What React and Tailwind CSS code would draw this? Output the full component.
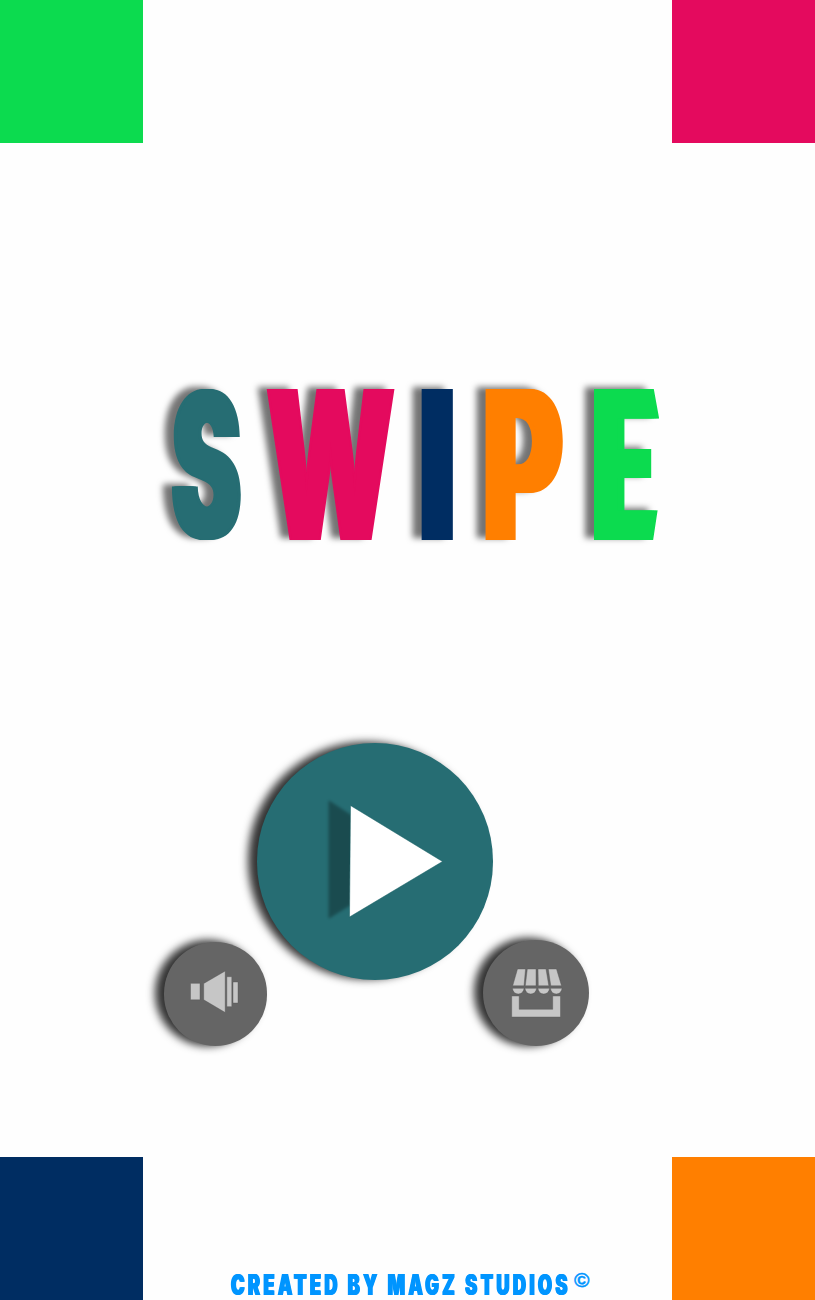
const letters = [
  {
    ch: "S",
    cell: "w-[68px] text-[#266d73]",
    glyph: "scale-x-[0.49] scale-y-[0.975] font-black [text-shadow:-7px_0_currentColor,7px_0_currentColor,-3px_0_currentColor,3px_0_currentColor]",
  },
  {
    ch: "W",
    cell: "w-[127px] ml-[27px] text-[#e40a5e]",
    glyph: "scale-x-[0.57] font-black [text-shadow:-4px_0_currentColor,4px_0_currentColor]",
  },
  { ch: "I", cell: "w-[31px] ml-[28px] text-[#002d62]", glyph: "scale-x-[0.76] font-black" },
  {
    ch: "P",
    cell: "w-[76px] ml-[32px] mr-[2px] text-[#ff7f00]",
    glyph: "scale-x-[0.58] font-extrabold [text-shadow:-8px_0_currentColor,8px_0_currentColor,-4px_0_currentColor,4px_0_currentColor]",
  },
  {
    ch: "E",
    cell: "w-[65px] ml-[31px] text-[#0cdb4f] [clip-path:polygon(0_0,92%_0,100%_19%,100%_30%,88%_30%,88%_70%,100%_70%,98%_80%,91%_100%,0_100%)]",
    glyph: "scale-x-[0.56] font-extrabold [text-shadow:-8px_0_currentColor,8px_0_currentColor,12px_0_currentColor,-4px_0_currentColor,4px_0_currentColor]",
  },
];

function Title() {
  return (
    <h1 className="ml-[172px] mt-[246px] flex h-[151px] font-['Inter',sans-serif] text-[208px] leading-[151px] [filter:drop-shadow(-9px_-2px_3px_rgba(0,0,0,0.55))]">
      {letters.map((l) => (
        <span key={l.ch} className={`flex shrink-0 justify-center ${l.cell}`}>
          <span className={`block shrink-0 ${l.glyph}`}>{l.ch}</span>
        </span>
      ))}
    </h1>
  );
}

function SoundIcon() {
  return (
    <svg viewBox="0 0 103 104" className="size-full">
      <g fill="#c6c6c6" stroke="#505050" strokeWidth="0.4">
        <path d="M26.500 41.300h9.500v16.500h-9.500z" />
        <path d="M39.700 41.500L61.200 29v41.500L39.700 57.800z" />
        <path d="M62.800 34.700h5v30h-5z" />
        <path d="M69 40h5v21h-5z" />
      </g>
    </svg>
  );
}

function ShopIcon() {
  return (
    <svg viewBox="0 0 106 106" className="size-full">
      <g fill="#c6c6c6" stroke="#505050" strokeWidth="0.4">
        <path d="M34.500 29H42.500L41 45.800H29.700z" />
        <path d="M44.300 29H53V45.800H42.300z" />
        <path d="M55 29H63L65.800 45.800H55.300z" />
        <path d="M65.300 29H73.500L78.500 45.800H67.800z" />
        <path d="M29.500 48.300h11.500a5.700 5.700 0 0 1-11.500 0z" />
        <path d="M42 48.300h11.500a5.700 5.700 0 0 1-11.500 0z" />
        <path d="M55 48.300h11.500a5.700 5.700 0 0 1-11.500 0z" />
        <path d="M67.500 48.300H79a5.700 5.700 0 0 1-11.500 0z" />
        <path d="M28.700 56h7.500v13.300h33.500V56h7.800v21H28.700z" />
      </g>
    </svg>
  );
}

function PlayIcon() {
  return (
    <svg viewBox="0 0 236 237" className="size-full">
      <path d="M72 58L164 118 72 175z" fill="#000" stroke="#000" strokeWidth="1" opacity="0.3" className="blur-[1.5px]" />
      <path d="M93.500 62.500L185.500 118.500 92.500 174z" fill="#fff" stroke="#105a5e" strokeWidth="0.5" />
    </svg>
  );
}

export default function App() {
  return (
    <main className="flex h-[1300px] w-[815px] flex-col bg-[#fefefe]">
      <div className="flex justify-between">
        <div className="size-[143px] bg-[#0cdb4f]" />
        <div className="size-[143px] bg-[#e40a5e]" />
      </div>
      <Title />
      <div className="ml-[164px] mt-[203px] flex items-start">
        <button aria-label="Sound" className="mt-[199px] h-[104px] w-[103px] shrink-0 rounded-full bg-[#656565] shadow-[-8px_-1px_9px_1px_rgba(0,0,0,0.8)]">
          <SoundIcon />
        </button>
        <button aria-label="Play" className="-ml-[10px] h-[237px] w-[236px] shrink-0 rounded-full bg-[#266d73] shadow-[-9px_-1px_8px_0px_rgba(0,0,0,0.8)]">
          <PlayIcon />
        </button>
        <button aria-label="Shop" className="-ml-[10px] mt-[197px] h-[106px] w-[106px] shrink-0 rounded-full bg-[#656565] shadow-[-8px_-1px_9px_1px_rgba(0,0,0,0.8)]">
          <ShopIcon />
        </button>
      </div>
      <footer className="mt-auto flex items-end">
        <div className="size-[143px] shrink-0 bg-[#002d62]" />
        <p className="ml-[88px] flex h-[30px] w-[441px] items-start font-['Inter',sans-serif] leading-[30px] whitespace-nowrap text-[#0095ff]">
          <span className="block w-[343px] origin-left scale-x-[0.63] text-[29px] font-black tracking-[5.2px] [text-shadow:-1px_0_currentColor,1px_0_currentColor]">CREATED BY MAGZ STUDIOS</span>
          <span className="block font-['Liberation_Sans',sans-serif] text-[21px] leading-[20px] font-bold [-webkit-text-stroke:0.4px_currentColor]">©</span>
        </p>
        <div className="size-[143px] shrink-0 bg-[#ff7f00]" />
      </footer>
    </main>
  );
}
